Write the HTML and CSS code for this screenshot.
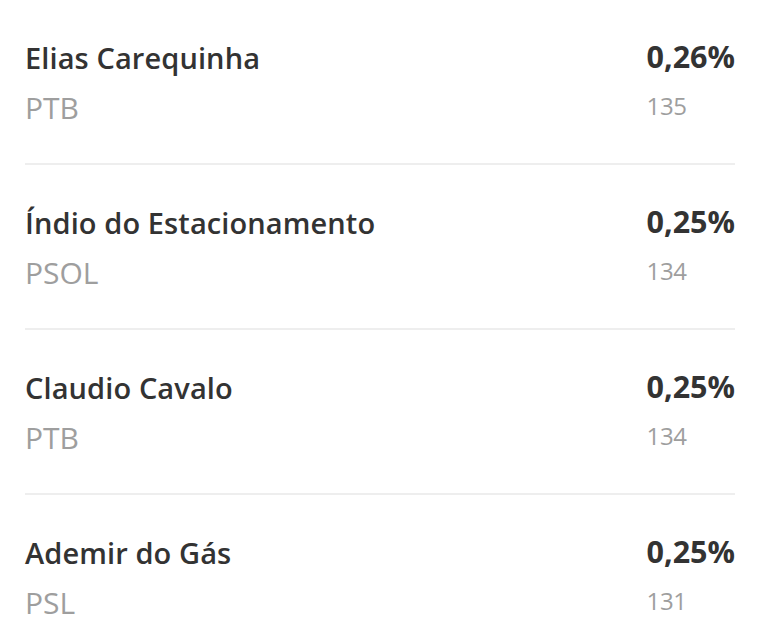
FILE: index.html
```html
<!DOCTYPE html>
<html lang="pt-BR">
<head>
    <meta charset="UTF-8">
    <meta name="viewport" content="width=device-width, initial-scale=1.0">
    <title>Candidatos</title>
    <link rel="stylesheet" href="styles.css">
</head>
<body>
    <ul class="candidatos">
        <li class="candidato">
            <div class="info">
                <span class="nome">Elias Carequinha</span>
                <span class="partido">PTB</span>
            </div>
            <div class="votos">
                <span class="percentual">0,26%</span>
                <span class="total">135</span>
            </div>
        </li>
        <li class="candidato">
            <div class="info">
                <span class="nome">Índio do Estacionamento</span>
                <span class="partido">PSOL</span>
            </div>
            <div class="votos">
                <span class="percentual">0,25%</span>
                <span class="total">134</span>
            </div>
        </li>
        <li class="candidato">
            <div class="info">
                <span class="nome">Claudio Cavalo</span>
                <span class="partido">PTB</span>
            </div>
            <div class="votos">
                <span class="percentual">0,25%</span>
                <span class="total">134</span>
            </div>
        </li>
        <li class="candidato">
            <div class="info">
                <span class="nome">Ademir do Gás</span>
                <span class="partido">PSL</span>
            </div>
            <div class="votos">
                <span class="percentual">0,25%</span>
                <span class="total">131</span>
            </div>
        </li>
    </ul>
</body>
</html>
```

FILE: styles.css
```css
body {
    margin: 0;
    background: #fff;
    font-family: "Open Sans", sans-serif;
}

.candidatos {
    list-style: none;
    margin: 0;
    padding: 0 25px;
}

.candidato {
    display: flex;
    justify-content: space-between;
    padding: 38px 0 25px;
    border-bottom: 2px solid #eee;
}

.info,
.votos {
    display: flex;
    flex-direction: column;
}

.votos {
    align-items: flex-start;
}

.nome {
    font-size: 29px;
    font-weight: 600;
    line-height: 40px;
    color: #333;
    letter-spacing: 0.1px;
}

.partido {
    font-size: 30px;
    font-weight: 400;
    line-height: 60px;
    color: #9e9e9e;
}

.percentual {
    font-size: 30.5px;
    font-weight: 700;
    line-height: 36px;
    color: #333;
}

.total {
    font-size: 24px;
    font-weight: 400;
    line-height: 64px;
    color: #9e9e9e;
    letter-spacing: -0.3px;
}
```
